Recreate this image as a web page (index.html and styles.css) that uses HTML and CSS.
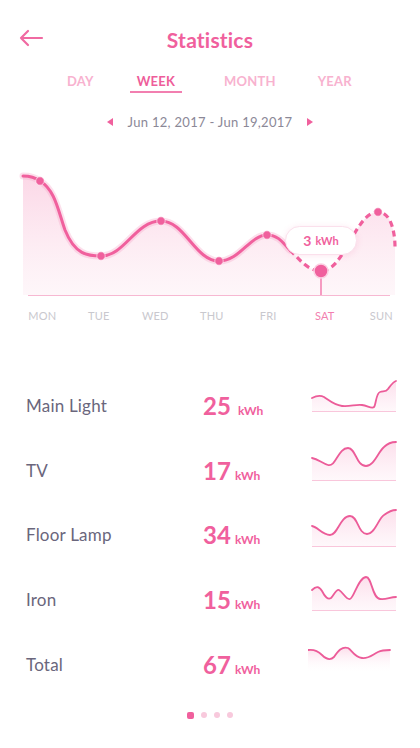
FILE: index.html
```html
<!DOCTYPE html>
<html lang="en">
<head>
<meta charset="utf-8">
<title>Statistics</title>
<link rel="stylesheet" href="styles.css">
</head>
<body>
<div class="screen">
  <svg class="defs" width="0" height="0">
    <defs>
      <linearGradient id="spg" x1="0" y1="0" x2="0" y2="1">
        <stop offset="0" stop-color="#fcd9e8" stop-opacity="0.85"/>
        <stop offset="1" stop-color="#fef3f8" stop-opacity="0.6"/>
      </linearGradient>
      <linearGradient id="tfill" x1="0" y1="0" x2="0" y2="1">
        <stop offset="0" stop-color="#fcd9e8" stop-opacity="0.9"/>
        <stop offset="1" stop-color="#ffffff" stop-opacity="0"/>
      </linearGradient>
      <linearGradient id="fillg" x1="0" y1="0" x2="0" y2="1">
        <stop offset="0" stop-color="#fbd3e4" stop-opacity="0.9"/>
        <stop offset="1" stop-color="#fdeef4" stop-opacity="0.5"/>
      </linearGradient>
    </defs>
  </svg>
  <header class="header">
    <svg class="back" width="26" height="20" viewBox="0 0 26 20">
      <path d="M3 10 H24 M10 3 L3 10 L10 17" fill="none" stroke="#f06aa2" stroke-width="2.2" stroke-linecap="round" stroke-linejoin="round"/>
    </svg>
    <h1 class="title">Statistics</h1>
  </header>

  <nav class="tabs">
    <span class="tab">DAY</span>
    <span class="tab active">WEEK</span>
    <span class="tab">MONTH</span>
    <span class="tab">YEAR</span>
  </nav>

  <div class="range">
    <span class="tri tri-left"></span>
    <span class="range-text">Jun 12, 2017 - Jun 19,2017</span>
    <span class="tri tri-right"></span>
  </div>

  <div class="chart">
    <svg class="chart-svg" width="420" height="140" viewBox="0 0 420 140">
      <path d="M23,16 C30,16 36,18 40,21 C55,30 58,50 65,70 C75,95 88,96 101,96 C125,96 135,61 161,61 C185,61 195,101 219,101 C240,101 250,75 267,75 C285,75 300,111 321,111 C345,111 355,52 378,52 C392,52 395,75 395,87 L395,135 L23,135 Z" fill="url(#fillg)"/>
      <path d="M23,16 C30,16 36,18 40,21 C55,30 58,50 65,70 C75,95 88,96 101,96 C125,96 135,61 161,61 C185,61 195,101 219,101 C240,101 250,75 267,75 C280,75 285,86 290,90" fill="none" stroke="#f7a6c8" stroke-opacity="0.35" stroke-width="7" stroke-linecap="round"/>
      <path d="M23,16 C30,16 36,18 40,21 C55,30 58,50 65,70 C75,95 88,96 101,96 C125,96 135,61 161,61 C185,61 195,101 219,101 C240,101 250,75 267,75 C280,75 285,86 290,90" fill="none" stroke="#f0609d" stroke-width="3" stroke-linecap="round"/>
      <path d="M290,90 C300,100 308,111 321,111 C345,111 355,52 378,52 C392,52 395,75 395,87" fill="none" stroke="#f0609d" stroke-width="3.2" stroke-dasharray="6 4"/>
      <line x1="28" y1="135.5" x2="390" y2="135.5" stroke="#f7b8d2" stroke-width="1.2"/>
      <line x1="321" y1="111" x2="321" y2="135" stroke="#f0609d" stroke-width="1.2"/>
      <g fill="#f0609d" stroke="#ffffff" stroke-opacity="0.6" stroke-width="1">
        <circle cx="40" cy="21" r="4.2"/>
        <circle cx="101" cy="96" r="4.2"/>
        <circle cx="161" cy="61" r="4.2"/>
        <circle cx="219" cy="101" r="4.2"/>
        <circle cx="267" cy="75" r="4.2"/>
        <circle cx="378" cy="52" r="4.2"/>
      </g>
      <circle cx="321" cy="111" r="7" fill="#f0609d" stroke="#fbd0e2" stroke-width="1.5"/>
    </svg>
    <div class="tooltip"><span class="tip-num">3</span> <span class="tip-unit">kWh</span></div>
  </div>

  <div class="days">
    <span>MON</span><span>TUE</span><span>WED</span><span>THU</span><span>FRI</span><span class="day-active">SAT</span><span>SUN</span>
  </div>

  <section class="list">
    <div class="row">
      <span class="name">Main Light</span>
      <span class="value"><b>25</b> <small class="wide">kWh</small></span>
      <svg class="spark" width="88" height="48" viewBox="0 0 88 48">
        <path d="M2,25 C6,23 10,22 14,24 C20,28 24,32 32,33 C40,34 46,31 52,32 C58,33 62,36 64,34 C66,32 66,20 70,19 C74,18 76,19 78,16 C81,12 83,9 86,8 L86,38 L2,38 Z" class="sp-fill"/>
        <path d="M2,25 C6,23 10,22 14,24 C20,28 24,32 32,33 C40,34 46,31 52,32 C58,33 62,36 64,34 C66,32 66,20 70,19 C74,18 76,19 78,16 C81,12 83,9 86,8" class="sp-line"/>
        <line x1="2" y1="38.5" x2="86" y2="38.5" class="sp-base"/>
      </svg>
    </div>
    <div class="row">
      <span class="name">TV</span>
      <span class="value"><b>17</b> <small>kWh</small></span>
      <svg class="spark" width="88" height="48" viewBox="0 0 88 48">
        <path d="M2,20 C8,21 12,25 18,27 C26,29 28,10 38,10 C46,10 46,28 56,28 C64,28 68,14 74,9 C78,5 82,4 86,4 L86,42 L2,42 Z" class="sp-fill"/>
        <path d="M2,20 C8,21 12,25 18,27 C26,29 28,10 38,10 C46,10 46,28 56,28 C64,28 68,14 74,9 C78,5 82,4 86,4" class="sp-line"/>
        <line x1="2" y1="42.5" x2="86" y2="42.5" class="sp-base"/>
      </svg>
    </div>
    <div class="row">
      <span class="name">Floor Lamp</span>
      <span class="value"><b>34</b> <small>kWh</small></span>
      <svg class="spark" width="88" height="48" viewBox="0 0 88 48">
        <path d="M2,23 C8,24 12,32 20,32 C28,32 30,13 40,13 C48,13 48,31 57,31 C65,31 68,16 74,12 C78,9 82,7 86,7 L86,43 L2,43 Z" class="sp-fill"/>
        <path d="M2,23 C8,24 12,32 20,32 C28,32 30,13 40,13 C48,13 48,31 57,31 C65,31 68,16 74,12 C78,9 82,7 86,7" class="sp-line"/>
        <line x1="2" y1="43.5" x2="86" y2="43.5" class="sp-base"/>
      </svg>
    </div>
    <div class="row">
      <span class="name">Iron</span>
      <span class="value"><b>15</b> <small>kWh</small></span>
      <svg class="spark" width="88" height="48" viewBox="0 0 88 48">
        <path d="M2,22 C6,18 9,18 12,23 C15,29 18,32 21,30 C24,27 26,21 29,22 C33,24 36,32 40,31 C44,30 48,10 56,9 C62,9 62,30 70,31 C76,32 80,29 86,29 L86,42 L2,42 Z" class="sp-fill"/>
        <path d="M2,22 C6,18 9,18 12,23 C15,29 18,32 21,30 C24,27 26,21 29,22 C33,24 36,32 40,31 C44,30 48,10 56,9 C62,9 62,30 70,31 C76,32 80,29 86,29" class="sp-line"/>
        <line x1="2" y1="42.5" x2="86" y2="42.5" class="sp-base"/>
      </svg>
    </div>
    <div class="row">
      <span class="name">Total</span>
      <span class="value"><b>67</b> <small>kWh</small></span>
      <svg class="spark spark-total" width="88" height="48" viewBox="0 0 88 48">
        <path d="M0,21 C6,20 10,22 14,26 C18,30 22,32 26,28 C30,22 34,17 40,19 C44,21 46,28 54,29 C60,30 64,26 70,23 C74,21 78,21 82,21 L82,44 L0,44 Z" fill="url(#tfill)"/>
        <path d="M0,21 C6,20 10,22 14,26 C18,30 22,32 26,28 C30,22 34,17 40,19 C44,21 46,28 54,29 C60,30 64,26 70,23 C74,21 78,21 82,21" class="sp-line"/>
      </svg>
    </div>
  </section>

  <div class="pager">
    <span class="dot active"></span>
    <span class="dot"></span>
    <span class="dot"></span>
    <span class="dot"></span>
  </div>
</div>
</body>
</html>
```

FILE: styles.css
```css
* { box-sizing: border-box; }
html, body { margin: 0; padding: 0; background: #ffffff; }
body { font-family: Lato, "Open Sans", "Liberation Sans", sans-serif; }

.screen {
  width: 420px;
  height: 748px;
  overflow: hidden;
  position: relative;
}
.defs { position: absolute; width: 0; height: 0; }

.header {
  position: relative;
  height: 58px;
  padding-top: 26px;
}
.back {
  position: absolute;
  left: 18px;
  top: 28px;
}
.title {
  margin: 0;
  text-align: center;
  font-size: 21px;
  line-height: 28px;
  font-weight: 700;
  color: #f0609d;
  letter-spacing: 0.2px;
}

.tabs {
  display: flex;
  align-items: flex-start;
  padding-left: 67px;
  margin-top: 15px;
  height: 34px;
}
.tab {
  font-size: 13px;
  line-height: 16px;
  font-weight: 700;
  color: #f8b2cf;
  letter-spacing: 0.2px;
  padding-bottom: 2px;
}
.tab.active {
  color: #ee5d9a;
  margin-left: 36px;
  padding: 0 7px 2px;
  border-bottom: 2px solid #f27fb0;
}
.tab:nth-child(3) { margin-left: 42px; }
.tab:nth-child(4) { margin-left: 42px; }

.range {
  display: flex;
  align-items: center;
  justify-content: center;
  gap: 15px;
  height: 30px;
}
.range-text {
  font-size: 13px;
  color: #8b8897;
  letter-spacing: 0.3px;
}
.tri {
  width: 0;
  height: 0;
  border-top: 4.5px solid transparent;
  border-bottom: 4.5px solid transparent;
}
.tri-left { border-right: 6px solid #f0609d; }
.tri-right { border-left: 6px solid #f0609d; }

.chart {
  position: relative;
  margin-top: 23px;
  height: 140px;
}
.chart-svg { display: block; }
.tooltip {
  position: absolute;
  left: 285px;
  top: 66px;
  width: 72px;
  height: 29px;
  border-radius: 15px;
  background: #ffffff;
  border: 1px solid #fbe0ec;
  box-shadow: 0 1px 6px rgba(240, 96, 157, 0.15);
  display: flex;
  align-items: center;
  justify-content: center;
  gap: 4px;
  color: #f0609d;
}
.tip-num { font-size: 14px; font-weight: 700; }
.tip-unit { font-size: 11px; font-weight: 700; }

.days {
  display: grid;
  grid-template-columns: repeat(7, 56.5px);
  padding-left: 14px;
  margin-top: 8px;
  height: 30px;
}
.days span {
  text-align: center;
  font-size: 11px;
  line-height: 16px;
  color: #c9c8ce;
  letter-spacing: 0.2px;
}
.days .day-active { color: #f27fb0; }

.list {
  margin-top: 35px;
}
.row {
  display: flex;
  align-items: center;
  height: 64.75px;
  padding-left: 26px;
}
.name {
  width: 177px;
  font-size: 17px;
  color: #6a667c;
  letter-spacing: 0.2px;
}
.value {
  width: 107px;
  color: #f0609d;
  white-space: nowrap;
}
.value b {
  font-size: 24px;
  font-weight: 700;
}
.value small {
  font-size: 12px;
  font-weight: 700;
}
.value small.wide { margin-left: 3px; }
.spark {
  display: block;
  margin-bottom: 16px;
}
.spark-total { margin-left: -2px; margin-bottom: 22px; }
.sp-fill { fill: url(#spg); }
.sp-line {
  fill: none;
  stroke: #ec5c99;
  stroke-width: 1.8;
  stroke-linecap: round;
}
.sp-base {
  stroke: #f9c6db;
  stroke-width: 1.2;
}

.pager {
  display: flex;
  justify-content: center;
  align-items: center;
  gap: 7px;
  margin-top: 15px;
}
.dot {
  width: 6px;
  height: 6px;
  border-radius: 50%;
  background: #f8c9dc;
}
.dot.active {
  width: 7px;
  height: 7px;
  border-radius: 2px;
  background: #f0609d;
}
```
